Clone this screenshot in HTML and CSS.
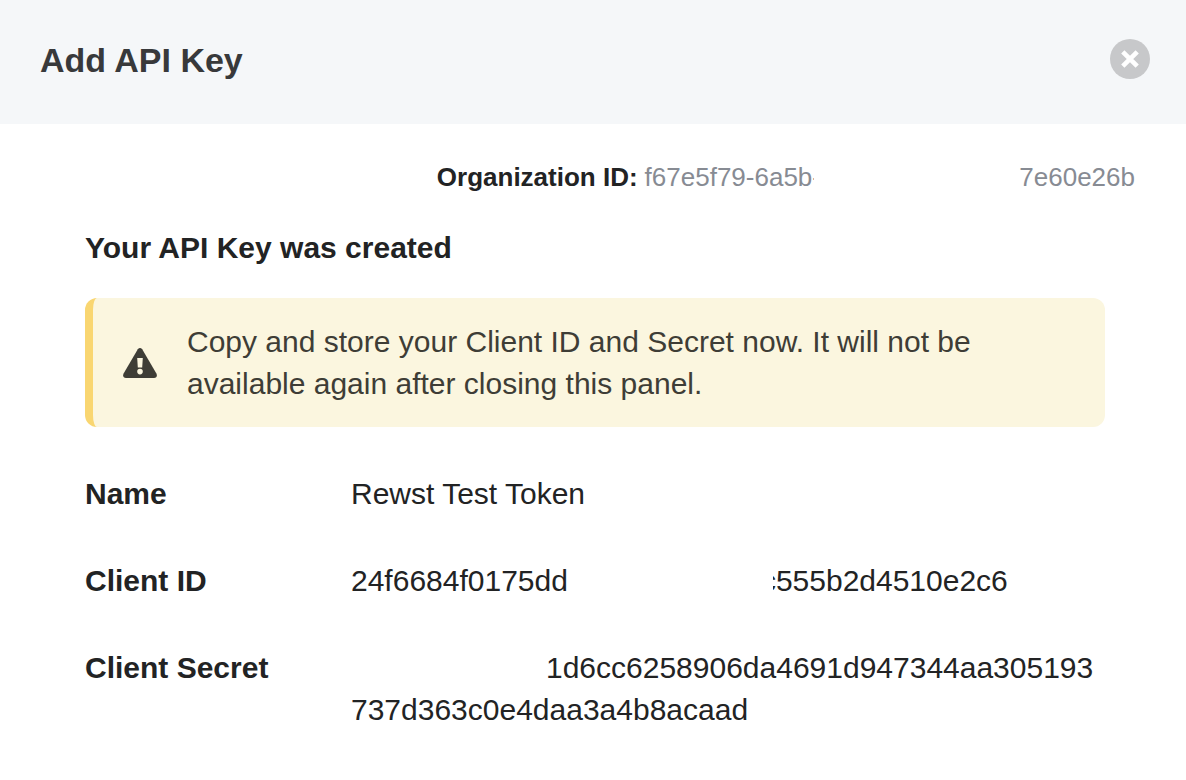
FILE: index.html
```html
<!DOCTYPE html>
<html lang="en">
<head>
<meta charset="utf-8">
<title>Add API Key</title>
<link rel="stylesheet" href="styles.css">
</head>
<body>
<header class="panel-header">
  <h1 class="panel-title">Add API Key</h1>
  <button class="close" type="button" aria-label="Close">
    <svg viewBox="0 0 40 40" aria-hidden="true"><path d="M12.8 12.8 27.2 27.2M27.2 12.8 12.8 27.2"/></svg>
  </button>
</header>
<main class="panel-body">
  <p class="organization"><strong class="organization-label">Organization ID:</strong><span>f67e5f79-6a5b</span><span class="fragment fragment-start">-</span><span class="redacted redacted-long"></span><span>7e60e26b</span></p>
  <section class="content">
    <h2 class="subtitle">Your API Key was created</h2>
    <div class="alert" role="alert">
      <svg class="alert-icon" viewBox="0 0 34 30" aria-hidden="true">
        <path class="alert-shape" d="M14.8 1.3Q17-1.3 19.2 1.3L33.4 25.5Q35 29.6 31 30H3Q-1 29.6.6 25.5Z"/>
        <path class="alert-mark" d="M14.2 10h5.6l-.6 9.4h-4.4zM17 20.8a2.8 2.8 0 1 1 0 5.6 2.8 2.8 0 0 1 0-5.6z"/>
      </svg>
      <p class="alert-text">Copy and store your Client ID and Secret now. It will not be available again after closing this panel.</p>
    </div>
    <dl class="details">
      <dt>Name</dt>
      <dd>Rewst Test Token</dd>
      <dt>Client ID</dt>
      <dd class="masked"><span>24f6684f0175dd</span><span class="redacted redacted-long"></span><span class="fragment fragment-end">c</span><span>555b2d4510e2c6</span></dd>
      <dt>Client Secret</dt>
      <dd><div class="masked"><span class="redacted"></span><span>1d6cc6258906da4691d947344aa305193</span></div><div>737d363c0e4daa3a4b8acaad</div></dd>
    </dl>
  </section>
</main>
</body>
</html>
```

FILE: styles.css
```css
* {
  box-sizing: border-box;
}

body {
  margin: 0;
  background: #fff;
  color: #222324;
  font-family: "Liberation Sans", Arial, sans-serif;
  font-size: 30px;
  line-height: 42px;
}

h1, h2, p, dl, dd {
  margin: 0;
}

.panel-header {
  display: flex;
  align-items: flex-start;
  justify-content: space-between;
  padding: 39px 36px 43px 40px;
  background: #f5f7f9;
}

.panel-title {
  color: #38393b;
  font-size: 34px;
  line-height: 42px;
}

.close {
  width: 40px;
  height: 40px;
  padding: 0;
  border: 0;
  border-radius: 50%;
  background: #c7c8ca;
  cursor: pointer;
}

.close svg {
  display: block;
  fill: none;
  stroke: #fff;
  stroke-width: 4.6;
}

.panel-body {
  padding: 36px 51px 36px 85px;
}

.organization {
  display: flex;
  justify-content: flex-end;
  color: #878b93;
  font-size: 26px;
  line-height: 34px;
}

.organization-label {
  margin-right: 7px;
  color: #222324;
}

.redacted {
  flex: none;
  width: 195px;
}

.redacted-long {
  width: 205px;
}

.fragment {
  display: flex;
  overflow: clip;
}

.fragment-start {
  width: 2px;
}

.fragment-end {
  width: 3px;
  justify-content: flex-end;
}

.content {
  padding-right: 30px;
}

.subtitle {
  margin: 33px 0 29px;
  font-size: 30px;
  line-height: 42px;
}

.alert {
  display: flex;
  align-items: center;
  gap: 30px;
  padding: 23px 30px 22px;
  border-left: 8px solid #f9d671;
  border-radius: 12px;
  background: #fbf6df;
  color: #3e3d36;
}

.alert-icon {
  flex: none;
  width: 34px;
  height: 30px;
}

.alert-shape {
  fill: #3e3d36;
}

.alert-mark {
  fill: #fbf6df;
}

.details {
  display: grid;
  grid-template-columns: 266px 1fr;
  row-gap: 45px;
  margin-top: 46px;
}

.details dt {
  font-weight: bold;
}

.masked {
  display: flex;
}
```
